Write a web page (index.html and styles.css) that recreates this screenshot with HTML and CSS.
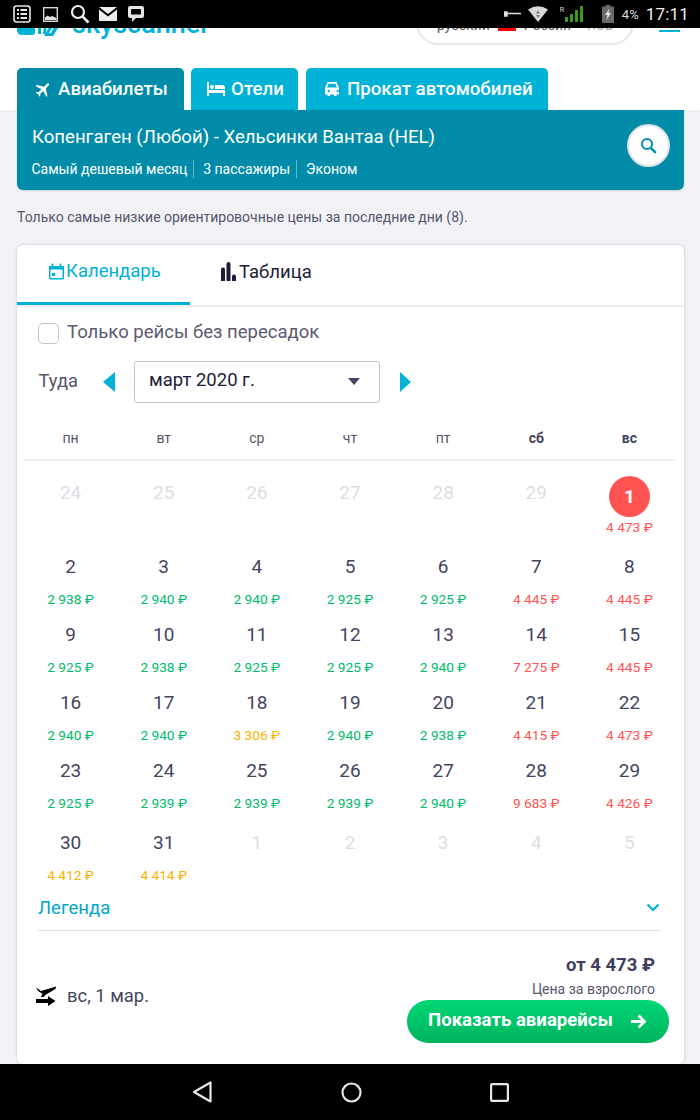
FILE: index.html
```html
<!DOCTYPE html>
<html lang="ru">
<head>
<meta charset="utf-8">
<title>Skyscanner</title>
<link rel="stylesheet" href="styles.css">
</head>
<body>
<div class="screen">
  <div class="status">
    <div class="status-left">
      <svg class="si" width="18" height="18" viewBox="0 0 18 18"><rect x="1" y="1" width="16" height="16" rx="2.5" fill="none" stroke="#e8e8e8" stroke-width="1.6"/><path d="M4 5h2M7.500 5h6.500M4 9h2M7.500 9h6.500M4 13h2M7.500 13h6.500" stroke="#e8e8e8" stroke-width="2"/></svg>
      <svg class="si i2" width="15" height="15" viewBox="0 0 15 15"><rect x="0.700" y="0.700" width="13.600" height="13.600" fill="#000" stroke="#d8d8d8" stroke-width="1.400"/><path d="M2 13v-2.500l2.500-2 2.500 1.500 2-1 2 1 2.500 1V13z" fill="#e0e0e0"/></svg>
      <svg class="si i3" width="20" height="20" viewBox="0 0 20 20"><circle cx="8" cy="8" r="6" fill="none" stroke="#eee" stroke-width="2.200"/><path d="M12.500 12.500l6 6" stroke="#eee" stroke-width="2.600"/></svg>
      <svg class="si i4" width="18" height="14" viewBox="0 0 18 14"><path d="M0 0h18l-9 7z" fill="#eee"/><path d="M0 2.500l9 7 9-7V14H0z" fill="#eee"/></svg>
      <svg class="si i5" width="16" height="16" viewBox="0 0 16 16"><path d="M2 0h12a2 2 0 0 1 2 2v8a2 2 0 0 1-2 2H8l-4 4v-4H2a2 2 0 0 1-2-2V2a2 2 0 0 1 2-2z" fill="#e4e4e4"/><rect x="3" y="3" width="10" height="5.500" rx="1" fill="#000"/></svg>
    </div>
    <div class="status-right">
      <svg class="sr1" width="17" height="6" viewBox="0 0 17 6"><path d="M0 1h3v4H0z M3 2.500h14" stroke="#ddd" stroke-width="1.500" fill="#ddd"/></svg>
      <svg class="sr2" width="20" height="16" viewBox="0 0 20 16"><path d="M0 3.500Q10-3 20 3.500L10 16z" fill="#d8d8d8"/><path d="M10 4.500l2 3h-4zM10 12l-2-3h4z" fill="#777"/></svg>
      <span class="roam">R</span>
      <svg class="sr3" width="18" height="16" viewBox="0 0 18 16"><path d="M0 11h3v5H0zM5 8h3v8H5zM10 4h3v12h-3zM15 0h3v16h-3z" fill="#3d9a1e"/></svg>
      <svg class="sr4" width="12" height="18" viewBox="0 0 12 18"><path d="M3.500 0h5v1.500H12V18H0V1.500h3.500z" fill="#6a6a6a"/><path d="M7.500 3.500L3 10h2.500l-1 5L9 8H6.500z" fill="#e8e8e8"/></svg>
      <span class="pct">4%</span>
      <span class="clock">17:11</span>
    </div>
  </div>

  <div class="page">
    <header class="top">
      <div class="logo">
        <svg class="logo-mark" width="44" height="24" viewBox="0 0 44 24"><path d="M0 0h18v7q0 3-3 3H5q-5 0-5-5zM21 0h3v9h-3zM27 0h3l-1 9h-3zM33 0h4l-5 8h2l4-8h5l-7 11h-9l3-5z" fill="#00b2d6"/></svg>
        <span class="logo-text">skyscanner</span>
      </div>
      <div class="locale">
        <span class="loc-lang">русский</span>
        <span class="flag"></span>
        <span class="loc-lang">Россия</span>
        <span class="loc-cur">• RUB</span>
      </div>
      <div class="burger"></div>
    </header>

    <nav class="tabs">
      <a class="tab tab-active">
        <svg width="19" height="19" viewBox="0 0 24 24"><path d="M21 16v-2l-8-5V3.500a1.500 1.500 0 0 0-3 0V9l-8 5v2l8-2.500V19l-2 1.500V22l3.500-1 3.500 1v-1.500L13 19v-5.500z" fill="#fff" transform="rotate(45 12 12)"/></svg>
        Авиабилеты
      </a>
      <a class="tab tab-hotel">
        <svg width="18" height="14" viewBox="0 0 18 14"><path d="M0 0h2v8h16v6h-2v-3H2v3H0z" fill="#fff"/><circle cx="5" cy="5" r="2" fill="#fff"/><path d="M8 3h7a3 3 0 0 1 3 3v1H8z" fill="#fff"/></svg>
        Отели
      </a>
      <a class="tab tab-car">
        <svg width="16" height="16" viewBox="0 0 16 16"><path d="M3.500 1h9L15 7v6.500h-2.500V15H10v-1.500H6V15H3.500v-1.500H1V7zM4.500 2.800L3.200 6.500h9.600l-1.300-3.700z M3.500 10a1.200 1.200 0 1 0 0-.01z M12.500 10a1.200 1.200 0 1 0 0-.01z" fill="#fff" fill-rule="evenodd"/></svg>
        Прокат автомобилей
      </a>
    </nav>

    <section class="search">
      <div class="search-text">
        <div class="route">Копенгаген (Любой) - Хельсинки Вантаа (HEL)</div>
        <div class="meta">
          <span class="meta-item">Самый дешевый месяц</span>
          <span class="meta-item">3 пассажиры</span>
          <span class="meta-item">Эконом</span>
        </div>
      </div>
      <button class="search-btn">
        <svg width="17" height="17" viewBox="0 0 17 17"><circle cx="7" cy="7" r="5" fill="none" stroke="#008ca8" stroke-width="2"/><path d="M10.800 10.800l5 5" stroke="#008ca8" stroke-width="2.400"/></svg>
      </button>
    </section>

    <p class="note">Только самые низкие ориентировочные цены за последние дни (8).</p>

    <section class="card">
      <div class="view-tabs">
        <div class="view-tab view-active">
          <svg width="17" height="17" viewBox="0 0 17 17"><path d="M1 3h15a1 1 0 0 1 0 0v12a1.500 1.500 0 0 1-1.500 1.500h-12A1.500 1.500 0 0 1 1 15z" fill="#00b2d6"/><rect x="2.500" y="6.500" width="12" height="8.500" fill="#fff"/><rect x="4" y="10" width="3" height="3" fill="#00b2d6"/><path d="M4.500 0.500v3M12.500 0.500v3" stroke="#00b2d6" stroke-width="1.800"/></svg>
          Календарь
        </div>
        <div class="view-tab view-table">
          <svg width="15" height="19" viewBox="0 0 15 19"><path d="M0 7.500a2 2 0 0 1 4 0V19H0zM5.500 2a2 2 0 0 1 4 0v17h-4zM11 14.500a2 2 0 0 1 4 0V19h-4z" fill="#1d1d38"/></svg>
          Таблица
        </div>
      </div>

      <label class="direct"><span class="checkbox"></span>Только рейсы без пересадок</label>

      <div class="month-row">
        <span class="dir">Туда</span>
        <span class="arrow arrow-left"></span>
        <div class="select"><span class="select-text">март 2020 г.</span><span class="caret"></span></div>
        <span class="arrow arrow-right"></span>
      </div>

      <div class="weekdays">
        <span>пн</span><span>вт</span><span>ср</span><span>чт</span><span>пт</span><span class="wk">сб</span><span class="wk">вс</span>
      </div>

      <div class="days">
        <div class="day off"><b>24</b></div>
        <div class="day off"><b>25</b></div>
        <div class="day off"><b>26</b></div>
        <div class="day off"><b>27</b></div>
        <div class="day off"><b>28</b></div>
        <div class="day off"><b>29</b></div>
        <div class="day sel"><b>1</b><i class="r">4 473 ₽</i></div>

        <div class="day"><b>2</b><i class="g">2 938 ₽</i></div>
        <div class="day"><b>3</b><i class="g">2 940 ₽</i></div>
        <div class="day"><b>4</b><i class="g">2 940 ₽</i></div>
        <div class="day"><b>5</b><i class="g">2 925 ₽</i></div>
        <div class="day"><b>6</b><i class="g">2 925 ₽</i></div>
        <div class="day"><b>7</b><i class="r">4 445 ₽</i></div>
        <div class="day"><b>8</b><i class="r">4 445 ₽</i></div>

        <div class="day"><b>9</b><i class="g">2 925 ₽</i></div>
        <div class="day"><b>10</b><i class="g">2 938 ₽</i></div>
        <div class="day"><b>11</b><i class="g">2 925 ₽</i></div>
        <div class="day"><b>12</b><i class="g">2 925 ₽</i></div>
        <div class="day"><b>13</b><i class="g">2 940 ₽</i></div>
        <div class="day"><b>14</b><i class="r">7 275 ₽</i></div>
        <div class="day"><b>15</b><i class="r">4 445 ₽</i></div>

        <div class="day"><b>16</b><i class="g">2 940 ₽</i></div>
        <div class="day"><b>17</b><i class="g">2 940 ₽</i></div>
        <div class="day"><b>18</b><i class="y">3 306 ₽</i></div>
        <div class="day"><b>19</b><i class="g">2 940 ₽</i></div>
        <div class="day"><b>20</b><i class="g">2 938 ₽</i></div>
        <div class="day"><b>21</b><i class="r">4 415 ₽</i></div>
        <div class="day"><b>22</b><i class="r">4 473 ₽</i></div>

        <div class="day"><b>23</b><i class="g">2 925 ₽</i></div>
        <div class="day"><b>24</b><i class="g">2 939 ₽</i></div>
        <div class="day"><b>25</b><i class="g">2 939 ₽</i></div>
        <div class="day"><b>26</b><i class="g">2 939 ₽</i></div>
        <div class="day"><b>27</b><i class="g">2 940 ₽</i></div>
        <div class="day"><b>28</b><i class="r">9 683 ₽</i></div>
        <div class="day"><b>29</b><i class="r">4 426 ₽</i></div>

        <div class="day"><b>30</b><i class="y">4 412 ₽</i></div>
        <div class="day"><b>31</b><i class="y">4 414 ₽</i></div>
        <div class="day off"><b>1</b></div>
        <div class="day off"><b>2</b></div>
        <div class="day off"><b>3</b></div>
        <div class="day off"><b>4</b></div>
        <div class="day off"><b>5</b></div>
      </div>

      <div class="legend">
        <span>Легенда</span>
        <svg width="14" height="9" viewBox="0 0 14 9"><path d="M1.500 1.500L7 7l5.500-5.500" fill="none" stroke="#00b2d6" stroke-width="2.200"/></svg>
      </div>

      <div class="summary">
        <div class="sum-date">
          <svg width="22" height="21" viewBox="0 0 22 21"><path d="M1 2.500l5 3.500 15-4.500-.5 2.500L11 9.500 8.500 12H6l1.500-3.200L3 6z" fill="#000"/><path d="M1 14h12v-3l7.500 5-7.500 5v-3H1z" fill="#000"/></svg>
          <span>вс, 1 мар.</span>
        </div>
        <div class="sum-right">
          <div class="sum-price">от 4 473 ₽</div>
          <div class="sum-label">Цена за взрослого</div>
          <button class="cta"><span class="cta-text">Показать авиарейсы</span>
            <svg width="17" height="15" viewBox="0 0 17 15"><path d="M1 7.500h13M8.500 1.500l6 6-6 6" fill="none" stroke="#fff" stroke-width="2.800"/></svg>
          </button>
        </div>
      </div>
    </section>
  </div>

  <div class="navbar">
    <svg width="20" height="22" viewBox="0 0 20 22"><path d="M18.500 1.500v19L2 11z" fill="none" stroke="#e6e6e6" stroke-width="2.200" stroke-linejoin="round"/></svg>
    <svg width="21" height="21" viewBox="0 0 21 21"><circle cx="10.500" cy="10.500" r="9" fill="none" stroke="#e6e6e6" stroke-width="2.200"/></svg>
    <svg width="19" height="19" viewBox="0 0 19 19"><rect x="1.100" y="1.100" width="16.800" height="16.800" rx="1" fill="none" stroke="#e6e6e6" stroke-width="2.200"/></svg>
  </div>
</div>
</body>
</html>
```

FILE: styles.css
```css
* { box-sizing: border-box; }
html, body { margin: 0; padding: 0; }
body { background: #f1f2f6; font-family: Roboto, "Noto Sans", sans-serif; color: #444560; }

.screen { width: 700px; height: 1120px; display: flex; flex-direction: column; overflow: hidden; }

/* status bar */
.status { height: 28px; flex: none; background: #000; display: flex; justify-content: space-between; align-items: center; padding: 0 11px 0 13px; }
.status-left, .status-right { display: flex; align-items: center; }
.si { display: block; }
.i2 { margin-left: 12px; }
.i3 { margin-left: 12px; }
.i4 { margin-left: 9px; }
.i5 { margin-left: 11px; }
.sr2 { margin-left: 7px; }
.roam { color: #ddd; font-size: 7px; margin: -8px 0 0 12px; width: 5px; }
.sr3 { margin-left: 0; }
.sr4 { margin-left: 19px; }
.pct { color: #ddd; font-size: 13px; margin-left: 8px; }
.clock { color: #eee; font-size: 17px; margin-left: 7px; letter-spacing: .2px; }

/* page */
.page { flex: 1; min-height: 0; overflow: hidden; display: flex; flex-direction: column; }

.top { height: 40px; flex: none; background: #fff; overflow: hidden; display: flex; align-items: flex-start; padding: 0 20px 0 17px; position: relative; }
.logo { display: flex; align-items: flex-start; margin-top: -20px; width: 399px; }
.logo-mark { margin-top: 17px; flex: none; }
.logo-text { color: #00b2d6; font-size: 27px; font-weight: 500; line-height: 32px; margin: 0 0 0 11px; }
.locale { width: 218px; height: 45px; margin-top: -28px; border: 2px solid #e6e6ef; border-radius: 22px; display: flex; align-items: flex-end; padding: 0 0 10px 19px; gap: 8px; font-size: 14px; color: #555; white-space: nowrap; }
.flag { width: 18px; height: 12px; background: #f00; margin-bottom: 2px; }
.loc-cur { color: #aaa; }
.burger { width: 21px; height: 2px; background: #00b2d6; margin: 2px 0 0 25px; }

.tabs { display: flex; gap: 7px; padding: 0 17px; height: 42px; flex: none; background: #fff; }
.tab { background: #00b2d6; color: #fff; font-size: 18.700px; font-weight: 500; height: 42px; border-radius: 5px 5px 0 0; display: flex; align-items: center; gap: 7px; white-space: nowrap; }
.tab-active { background: #008ca8; width: 167px; padding-left: 17px; gap: 5px; }
.tab-hotel { width: 107px; padding-left: 16px; gap: 6px; }
.tab-car { width: 242px; padding-left: 18px; margin-left: 1px; }

.search { margin: 0 16px 0 17px; height: 80px; flex: none; background: #008ca8; border-radius: 0 0 6px 6px; box-shadow: 0 1px 2px rgba(0,0,0,.15); display: flex; justify-content: space-between; align-items: flex-start; padding: 0 14px 0 15px; color: #fff; }
.search-text { margin-top: 15px; }
.route { font-size: 18.600px; line-height: 24px; }
.meta { display: flex; margin-top: 11px; font-size: 14px; line-height: 18px; margin-left: -.5px; }
.meta-item { padding: 0 6px 0 0; margin-right: 9px; border-right: 1px solid rgba(255,255,255,.4); }
.meta-item:last-child { border: 0; }
.search-btn { width: 43px; height: 43px; margin-top: 14px; border-radius: 50%; background: #fff; border: 2px solid #dfe0e8; display: flex; align-items: center; justify-content: center; padding: 0; }

.note { margin: 18px 0 0 17px; height: 37px; font-size: 14px; line-height: 18px; color: #55556b; flex: none; }

.card { margin: 0 16px 0 17px; flex: 1; background: #fff; border-radius: 6px; box-shadow: 0 0 3px rgba(0,0,0,.2); padding: 0; }

.view-tabs { display: flex; height: 62px; border-bottom: 2px solid #eeeef2; }
.view-tab { display: flex; align-items: center; gap: 1px; font-size: 18.500px; color: #1d1d38; height: 60px; padding-bottom: 5px; }
.view-active { width: 173px; color: #00b2d6; border-bottom: 3px solid #00b2d6; padding-left: 31px; }
.view-table { margin-left: 31px; gap: 3px; padding-bottom: 7px; }

.direct { display: flex; align-items: center; gap: 8px; margin: 15px 0 0 21px; height: 20px; font-size: 18.550px; color: #5b5b70; }
.checkbox { width: 21px; height: 21px; margin-top: 2px; border: 1.500px solid #c4c4d0; border-radius: 5px; background: #fff; flex: none; }

.month-row { display: flex; align-items: center; margin: 19px 0 0 21.500px; height: 41px; }
.dir { font-size: 18.300px; color: #55556b; width: 64.500px; padding-bottom: 3px; }
.arrow { width: 0; height: 0; border-top: 10px solid transparent; border-bottom: 10px solid transparent; }
.arrow-left { border-right: 12px solid #00b2d6; margin-right: 19px; }
.arrow-right { border-left: 11px solid #00b2d6; margin-left: 20px; }
.select { width: 246px; height: 42px; border: 1.500px solid #c4c4cc; border-radius: 3px; display: flex; justify-content: space-between; align-items: center; padding: 0 19px 0 14px; font-size: 18.500px; color: #1d1d38; }
.select-text { padding-bottom: 3px; }
.caret { width: 0; height: 0; border-left: 6.500px solid transparent; border-right: 6.500px solid transparent; border-top: 7px solid #444560; }

.weekdays { display: grid; grid-template-columns: repeat(7, 1fr); margin: 25px 8px 0 7px; height: 34px; border-bottom: 2px solid #eeeef2; font-size: 14px; line-height: 22px; text-align: center; color: #55556b; }
.wk { font-weight: 700; color: #444560; }

.days { display: grid; grid-template-columns: repeat(7, 1fr); grid-template-rows: 74px 68px 68px 68px 72px 50px; margin: 20px 8px 0 7px; text-align: center; }
.day { display: flex; flex-direction: column; align-items: center; }
.day b { font-weight: 400; font-size: 19px; line-height: 24px; color: #444560; }
.day i { font-style: normal; font-size: 13.700px; line-height: 16px; margin-top: 12px; white-space: nowrap; }
.off b { color: #dddde5; }
.sel b { width: 41px; height: 41px; margin-top: -5px; line-height: 41px; border-radius: 50%; background: #ff5452; color: #fff; font-weight: 700; }
.sel i { margin-top: 2px; }
.g { color: #00bb6e; }
.r { color: #ff5452; }
.y { color: #f8b300; }

.legend { display: flex; justify-content: space-between; align-items: center; margin: 7px 24px 0 21px; height: 43px; padding-bottom: 3px; border-bottom: 1px solid #dddde8; font-size: 18.500px; color: #00a8cc; }

.summary { display: flex; justify-content: space-between; align-items: flex-end; padding: 0 15px 0 18px; }
.sum-date { display: flex; align-items: center; gap: 10px; font-size: 18.400px; color: #444560; margin-bottom: 37px; }
.sum-right { display: flex; flex-direction: column; align-items: flex-end; }
.sum-price { font-size: 18.500px; font-weight: 700; line-height: 24px; margin-top: 22px; padding-right: 14px; color: #3f4060; }
.sum-label { font-size: 14px; line-height: 18px; margin-top: 3px; padding-right: 14px; color: #55556b; }
.cta { width: 262px; height: 43px; border: 0; border-radius: 22px; margin-top: 2px; background: linear-gradient(#00d775, #00b35f); color: #fff; font: 700 18.600px Roboto, sans-serif; display: flex; align-items: center; justify-content: space-between; padding: 0 22px 0 21px; }
.cta-text { padding-bottom: 3px; }

.navbar { height: 56px; flex: none; background: #000; display: flex; align-items: center; padding: 0 191px 0 192px; justify-content: space-between; }
```
